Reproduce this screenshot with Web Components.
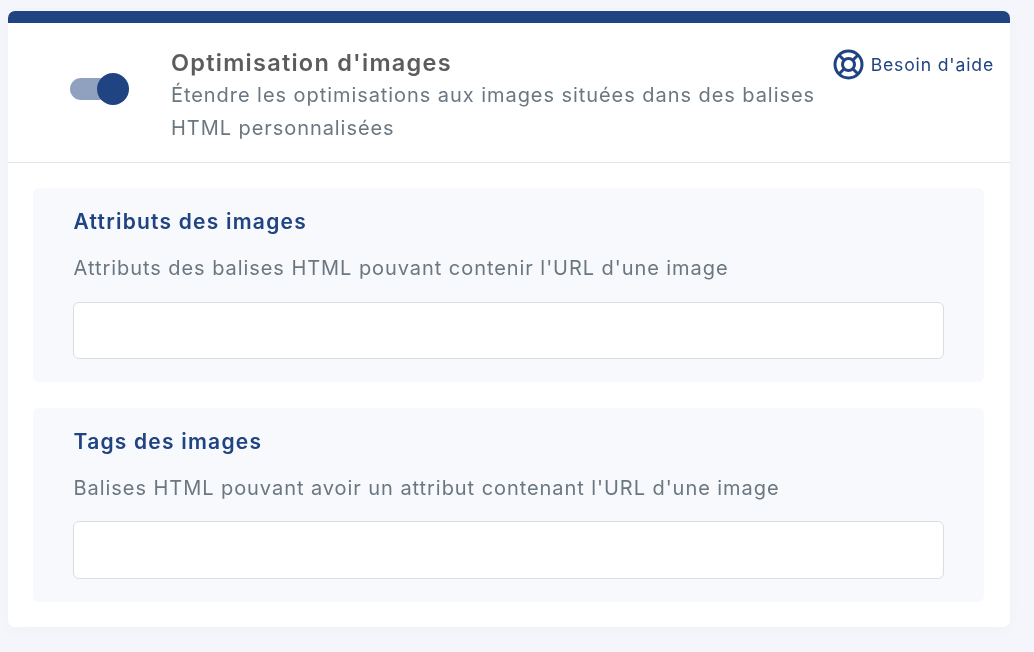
<!DOCTYPE html>
<html><head><meta charset="utf-8"><style>
html,body{margin:0;padding:0;background:#f4f6fb;height:652px;overflow:hidden}
body{font-family:Inter,"Liberation Sans",sans-serif;padding:11px 24px 0 8px;box-sizing:border-box}
</style></head><body>
<option-card>
<span slot="title">Optimisation d'images</span>
<span slot="desc">Étendre les optimisations aux images situées dans des balises HTML personnalisées</span>
<attr-box heading="Attributs des images" text="Attributs des balises HTML pouvant contenir l'URL d'une image"></attr-box>
<attr-box heading="Tags des images" text="Balises HTML pouvant avoir un attribut contenant l'URL d'une image"></attr-box>
</option-card>
<script>
class ToggleSwitch extends HTMLElement{constructor(){super();this.attachShadow({mode:'open'}).innerHTML=`<style>
:host{display:block;width:59px;height:32px}
.w{display:flex;align-items:center;height:32px}
.t{width:40px;height:22px;border-radius:11px;background:#90a1c0}
.k{width:32px;height:32px;border-radius:50%;background:#204382;margin-left:-13px}
</style><div class="w"><div class="t"></div><div class="k"></div></div>`}}
class HelpLink extends HTMLElement{constructor(){super();this.attachShadow({mode:'open'}).innerHTML=`<style>
:host{display:flex;align-items:center;gap:7px;color:#204382;font-size:17.6px;letter-spacing:.84px;white-space:nowrap}
svg{display:block;width:31px;height:31px;flex:none}
</style><svg viewBox="0 0 31 31" fill="none" stroke="#204382" stroke-width="3"><circle cx="15.5" cy="15.5" r="13.5"/><circle cx="15.5" cy="15.5" r="6"/><path d="M6 6l5.2 5.2M25 6l-5.2 5.2M6 25l5.2-5.2M25 25l-5.2-5.2"/></svg><span><slot></slot></span>`}}
class AttrBox extends HTMLElement{constructor(){super();this.attachShadow({mode:'open'}).innerHTML=`<style>
:host{display:block;box-sizing:border-box;height:193.8px;background:#f8f9fc;border-radius:6px;padding:20px 40px 0 40px}
h3,p{padding-left:.6px}
h3{margin:0;font-size:21px;line-height:27px;font-weight:600;color:#204382;letter-spacing:1.22px}
p{margin:20px 0 0;font-size:20px;line-height:27px;color:#6b7780;letter-spacing:.94px}
.i{box-sizing:border-box;height:57.6px;margin-top:19.6px;background:#fff;border:1px solid #dcdde0;border-radius:6px}
</style><h3></h3><p></p><div class="i"></div>`;
this.shadowRoot.querySelector('h3').textContent=this.getAttribute('heading');
this.shadowRoot.querySelector('p').textContent=this.getAttribute('text');}}
class OptionCard extends HTMLElement{constructor(){super();this.attachShadow({mode:'open'}).innerHTML=`<style>
:host{display:block;width:1002px;height:616px;box-sizing:border-box;background:#fff;border-top:12px solid #204382;border-radius:7px;box-shadow:0 4px 16px rgba(30,50,110,.025);will-change:transform}
header{display:flex;align-items:flex-start;height:140px;box-sizing:border-box;border-bottom:1px solid #e3e4e6;padding:0 16px 0 62px}
toggle-switch{margin-top:50px;margin-right:42px}
.m{width:655px;flex:none}
.ti{font-size:23.5px;font-weight:600;color:#5c5c5c;line-height:30px;margin-top:25px;letter-spacing:1.25px}
.de{font-size:20px;line-height:33px;color:#6b7780;margin-top:1px;letter-spacing:.94px}
help-link{margin:26px 0 0 auto}
.b{display:flex;flex-direction:column;gap:26px;padding:25px 26px 0 25px}
</style><header><toggle-switch></toggle-switch><div class="m"><div class="ti"><slot name="title"></slot></div><div class="de"><slot name="desc"></slot></div></div><help-link>Besoin d'aide</help-link></header><div class="b"><slot></slot></div>`}}
customElements.define('toggle-switch',ToggleSwitch);
customElements.define('help-link',HelpLink);
customElements.define('attr-box',AttrBox);
customElements.define('option-card',OptionCard);
</script>
</body></html>
